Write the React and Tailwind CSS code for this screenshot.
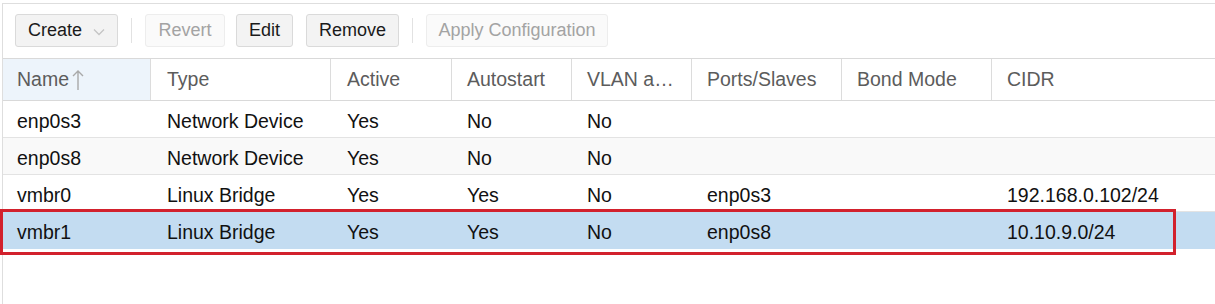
import React from "react";

const cols = [
  { key: "name", label: "Name", w: "w-[148px]", pl: "pl-[14px]" },
  { key: "type", label: "Type", w: "w-[180px]", pl: "pl-[16px]" },
  { key: "active", label: "Active", w: "w-[121px]", pl: "pl-[16px]" },
  { key: "autostart", label: "Autostart", w: "w-[120px]", pl: "pl-[15px]" },
  { key: "vlan", label: "VLAN a…", w: "w-[120px]", pl: "pl-[15px]" },
  { key: "ports", label: "Ports/Slaves", w: "w-[150px]", pl: "pl-[15px]" },
  { key: "bond", label: "Bond Mode", w: "w-[150px]", pl: "pl-[15px]" },
  { key: "cidr", label: "CIDR", w: "flex-1", pl: "pl-[15px]" },
];

const rows = [
  { name: "enp0s3", type: "Network Device", active: "Yes", autostart: "No", vlan: "No", ports: "", bond: "", cidr: "" },
  { name: "enp0s8", type: "Network Device", active: "Yes", autostart: "No", vlan: "No", ports: "", bond: "", cidr: "" },
  { name: "vmbr0", type: "Linux Bridge", active: "Yes", autostart: "Yes", vlan: "No", ports: "enp0s3", bond: "", cidr: "192.168.0.102/24" },
  { name: "vmbr1", type: "Linux Bridge", active: "Yes", autostart: "Yes", vlan: "No", ports: "enp0s8", bond: "", cidr: "10.10.9.0/24" },
];

function Btn({ children, disabled, className = "" }) {
  return (
    <div
      className={`h-[33px] flex items-center whitespace-nowrap rounded-[3px] border ${
        disabled
          ? "bg-[#fafafa] border-[#ededed] text-[#a3a3a3]"
          : "bg-[#f3f3f3] border-[#dadada] text-[#1a1a1a]"
      } ${className}`}
    >
      {children}
    </div>
  );
}

function Sep() {
  return <div className="w-px h-[25px] mt-[4px] bg-[#e2e2e2] mx-[13px]" />;
}

export default function App() {
  return (
    <div
      className="relative w-[1215px] h-[304px] bg-white overflow-hidden"
      style={{ fontFamily: '"Liberation Sans", Arial, sans-serif' }}
    >
      <div className="mt-[3px] border-t border-[#dedede] ml-[2px] border-l h-[301px]">
        {/* toolbar */}
        <div className="h-[54px] flex items-start pt-[10px] pl-[12px] text-[18px]">
          <Btn className="w-[103px] justify-between pl-[12px] pr-[12px]">
            <span>Create</span>
            <svg width="12" height="8" viewBox="0 0 12 8" className="mt-[2px]">
              <path d="M1 1.5 L6 6.5 L11 1.5" fill="none" stroke="#c4c4c4" strokeWidth="1.3" />
            </svg>
          </Btn>
          <Sep />
          <Btn disabled className="w-[80px] justify-center">Revert</Btn>
          <div className="w-[11px]" />
          <Btn className="w-[57px] justify-center">Edit</Btn>
          <div className="w-[13px]" />
          <Btn className="w-[93px] justify-center">Remove</Btn>
          <Sep />
          <Btn disabled className="w-[182px] justify-center">Apply Configuration</Btn>
        </div>
        {/* header */}
        <div className="flex h-[43px] border-t border-b border-[#d9d9d9] text-[#5c5c5c] text-[19.5px]">
          {cols.map((c, i) => (
            <div
              key={c.key}
              className={`${c.w} ${c.pl} flex items-center whitespace-nowrap ${i < cols.length - 1 ? "border-r border-[#dcdcdc]" : ""} ${
                i === 0 ? "bg-[#edf4fb]" : ""
              }`}
            >
              <span>{c.label}</span>
              {i === 0 && (
                <svg width="12" height="22" viewBox="0 0 12 22" className="ml-[3px]">
                  <path d="M6 21 L6 2 M1 7 L6 2 L11 7" fill="none" stroke="#a9a9a9" strokeWidth="1.4" />
                </svg>
              )}
            </div>
          ))}
        </div>
        {/* rows */}
        {rows.map((r, ri) => (
          <div
            key={r.name}
            className={`flex h-[37px] border-b text-[#111] text-[19.5px] ${
              ri === 3 ? "bg-[#c3dcf1] border-[#c3dcf1]" : ri === 1 ? "bg-[#f9f9f9] border-[#e3e3e3]" : "bg-white border-[#e3e3e3]"
            }`}
          >
            {cols.map((c) => (
              <div key={c.key} className={`${c.w} ${c.pl} flex items-center pt-[5px] whitespace-nowrap`}>
                {r[c.key]}
              </div>
            ))}
          </div>
        ))}
      </div>
      {/* red annotation box */}
      <div className="absolute left-0 top-[209px] w-[1176px] h-[46px] border-[3px] border-[#d2212d]" />
    </div>
  );
}
